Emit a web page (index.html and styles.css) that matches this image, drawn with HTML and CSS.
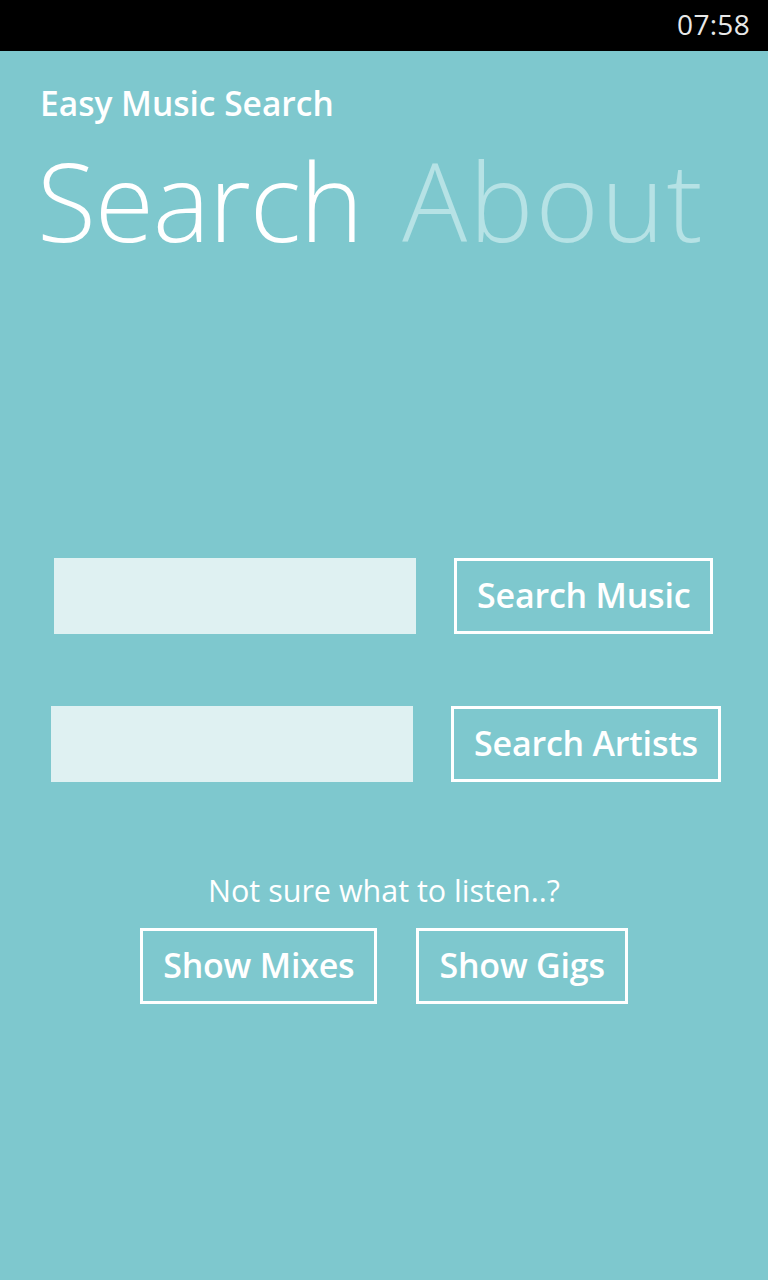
FILE: index.html
```html
<!DOCTYPE html>
<html>
<head>
<meta charset="utf-8">
<link rel="stylesheet" href="styles.css">
</head>
<body>
<div class="status"><span class="time">07:58</span></div>
<main class="app">
  <div class="app-title">Easy Music Search</div>
  <div class="pivot">
    <span class="pivot-item active">Search</span>
    <span class="pivot-item pivot-about">About</span>
  </div>
  <div class="search-row row-music">
    <input class="field" type="text">
    <button class="btn">Search Music</button>
  </div>
  <div class="search-row row-artists">
    <input class="field" type="text">
    <button class="btn">Search Artists</button>
  </div>
  <p class="hint">Not sure what to listen..?</p>
  <div class="bottom-row">
    <button class="btn btn-mixes">Show Mixes</button>
    <button class="btn btn-gigs">Show Gigs</button>
  </div>
</main>
</body>
</html>
```
FILE: styles.css
```css
html, body {
  margin: 0;
  padding: 0;
  height: 1280px;
  background: #7ec8ce;
  font-family: "Open Sans", "Noto Sans", sans-serif;
  color: #ffffff;
  overflow: hidden;
}
.status {
  height: 51px;
  background: #000000;
  display: flex;
  justify-content: flex-end;
  align-items: center;
}
.time {
  font-size: 28px;
  color: #e8e8e8;
  margin-right: 18px;
  margin-top: -4px;
  letter-spacing: 0.3px;
}
.app {
  padding-left: 40px;
}
.app-title {
  font-size: 33.5px;
  font-weight: 600;
  margin-top: 30px;
  line-height: 44px;
  letter-spacing: 0;
}
.pivot {
  display: flex;
  gap: 40px;
  line-height: 140px;
  height: 140px;
  margin-left: -3px;
  margin-top: 6px;
}
.pivot-item {
  font-size: 108px;
  font-weight: 300;
  color: #b6e2e5;
  letter-spacing: -1.2px;
}
.pivot-item.active {
  color: #ffffff;
}
.pivot-about {
  letter-spacing: 2px;
}
.search-row {
  display: flex;
  gap: 38px;
  height: 76px;
}
.row-music {
  margin-top: 287px;
  padding-left: 14px;
}
.row-artists {
  margin-top: 72px;
  padding-left: 11px;
}
.field {
  width: 362px;
  height: 76px;
  box-sizing: border-box;
  border: none;
  background: #dff1f2;
  margin: 0;
  padding: 0;
  outline: none;
}
.btn {
  height: 76px;
  box-sizing: border-box;
  border: 3px solid #ffffff;
  background: transparent;
  color: #ffffff;
  font-family: "Open Sans", "Noto Sans", sans-serif;
  font-size: 34px;
  font-weight: 600;
  letter-spacing: -0.2px;
  padding: 0 20px 3px;
  margin: 0;
  line-height: 1;
}
.hint {
  margin: 88px 0 0 -40px;
  text-align: center;
  font-size: 30.5px;
  line-height: 40px;
}
.bottom-row {
  display: flex;
  justify-content: center;
  gap: 39px;
  margin-left: -40px;
  margin-top: 18px;
}
```
